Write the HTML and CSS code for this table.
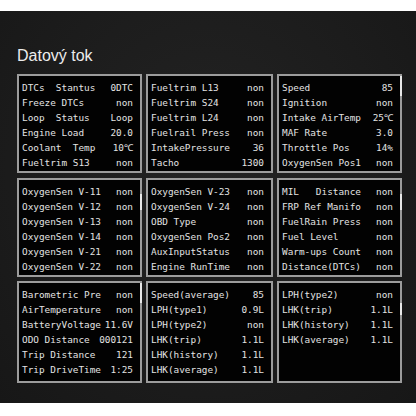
FILE: index.html
```html
<!DOCTYPE html>
<html lang="cs">
<head>
<meta charset="utf-8">
<title>Datový tok</title>
<link rel="stylesheet" href="styles.css">
</head>
<body>
<div class="screen">
  <h1 class="title">Datový tok</h1>
  <div class="grid">
    <div class="panel">
      <div class="row"><span>DTCs  Stantus</span><span>0DTC</span></div>
      <div class="row"><span>Freeze DTCs</span><span>non</span></div>
      <div class="row"><span>Loop  Status</span><span>Loop</span></div>
      <div class="row"><span>Engine Load</span><span>20.0</span></div>
      <div class="row"><span>Coolant  Temp</span><span>10℃</span></div>
      <div class="row"><span>Fueltrim S13</span><span>non</span></div>
    </div>
    <div class="panel">
      <div class="row"><span>Fueltrim L13</span><span>non</span></div>
      <div class="row"><span>Fueltrim S24</span><span>non</span></div>
      <div class="row"><span>Fueltrim L24</span><span>non</span></div>
      <div class="row"><span>Fuelrail Press</span><span>non</span></div>
      <div class="row"><span>IntakePressure</span><span>36</span></div>
      <div class="row"><span>Tacho</span><span>1300</span></div>
    </div>
    <div class="panel">
      <span class="thumb thumb-top"></span>
      <div class="row"><span>Speed</span><span>85</span></div>
      <div class="row"><span>Ignition</span><span>non</span></div>
      <div class="row"><span>Intake AirTemp</span><span>25℃</span></div>
      <div class="row"><span>MAF Rate</span><span>3.0</span></div>
      <div class="row"><span>Throttle Pos</span><span>14%</span></div>
      <div class="row"><span>OxygenSen Pos1</span><span>non</span></div>
    </div>

    <div class="panel">
      <span class="thumb thumb-mid"></span>
      <div class="row"><span>OxygenSen V-11</span><span>non</span></div>
      <div class="row"><span>OxygenSen V-12</span><span>non</span></div>
      <div class="row"><span>OxygenSen V-13</span><span>non</span></div>
      <div class="row"><span>OxygenSen V-14</span><span>non</span></div>
      <div class="row"><span>OxygenSen V-21</span><span>non</span></div>
      <div class="row"><span>OxygenSen V-22</span><span>non</span></div>
    </div>
    <div class="panel">
      <div class="row"><span>OxygenSen V-23</span><span>non</span></div>
      <div class="row"><span>OxygenSen V-24</span><span>non</span></div>
      <div class="row"><span>OBD Type</span><span>non</span></div>
      <div class="row"><span>OxygenSen Pos2</span><span>non</span></div>
      <div class="row"><span>AuxInputStatus</span><span>non</span></div>
      <div class="row"><span>Engine RunTime</span><span>non</span></div>
    </div>
    <div class="panel">
      <span class="thumb thumb-mid"></span>
      <div class="row"><span>MIL   Distance</span><span>non</span></div>
      <div class="row"><span>FRP Ref Manifo</span><span>non</span></div>
      <div class="row"><span>FuelRain Press</span><span>non</span></div>
      <div class="row"><span>Fuel Level</span><span>non</span></div>
      <div class="row"><span>Warm-ups Count</span><span>non</span></div>
      <div class="row"><span>Distance(DTCs)</span><span>non</span></div>
    </div>

    <div class="panel">
      <span class="thumb thumb-top"></span>
      <div class="row"><span>Barometric Pre</span><span>non</span></div>
      <div class="row"><span>AirTemperature</span><span>non</span></div>
      <div class="row"><span>BatteryVoltage</span><span>11.6V</span></div>
      <div class="row"><span>ODO Distance</span><span>000121</span></div>
      <div class="row"><span>Trip Distance</span><span>121</span></div>
      <div class="row"><span>Trip DriveTime</span><span>1:25</span></div>
    </div>
    <div class="panel">
      <div class="row"><span>Speed(average)</span><span>85</span></div>
      <div class="row"><span>LPH(type1)</span><span>0.9L</span></div>
      <div class="row"><span>LPH(type2)</span><span>non</span></div>
      <div class="row"><span>LHK(trip)</span><span>1.1L</span></div>
      <div class="row"><span>LHK(history)</span><span>1.1L</span></div>
      <div class="row"><span>LHK(average)</span><span>1.1L</span></div>
    </div>
    <div class="panel">
      <span class="thumb thumb-low"></span>
      <div class="row"><span>LPH(type2)</span><span>non</span></div>
      <div class="row"><span>LHK(trip)</span><span>1.1L</span></div>
      <div class="row"><span>LHK(history)</span><span>1.1L</span></div>
      <div class="row"><span>LHK(average)</span><span>1.1L</span></div>
    </div>
  </div>
</div>
</body>
</html>
```
FILE: styles.css
```css
html, body {
  margin: 0;
  padding: 0;
  background: #ffffff;
  overflow: hidden;
}

body {
  padding-top: 11px;
  width: 416px;
  height: 416px;
  box-sizing: border-box;
}

.screen {
  width: 416px;
  height: 392px;
  box-sizing: border-box;
  padding: 37px 0 0 17px;
  background: radial-gradient(ellipse at 50% 40%, #232323 0%, #1c1c1c 60%, #171717 100%);
}

.title {
  margin: 0 0 10px 0;
  font-family: "Liberation Sans", Arial, sans-serif;
  font-weight: normal;
  font-size: 16px;
  line-height: 16px;
  color: #ececec;
}

.grid {
  display: grid;
  grid-template-columns: 125px 127px 125px;
  grid-template-rows: 99px 99px 102px;
  column-gap: 4px;
  row-gap: 4.5px;
}

.panel {
  position: relative;
  background: #020202;
  border: 2px solid #9c9c9c;
  box-sizing: border-box;
  padding: 4px 7px 0 3px;
  display: flex;
  flex-direction: column;
}

.row {
  display: flex;
  justify-content: space-between;
  height: 15px;
  line-height: 15px;
  font-family: "DejaVu Sans Mono", "Liberation Mono", monospace;
  font-size: 9.4px;
  color: #e2e2e2;
  white-space: pre;
}

.thumb {
  position: absolute;
  right: -2px;
  width: 2px;
  background: #e8e8e8;
}

.thumb-top {
  top: 0;
  height: 20px;
}

.thumb-mid {
  top: 14px;
  height: 16px;
}

.thumb-low {
  top: 20px;
  height: 12px;
}
```
